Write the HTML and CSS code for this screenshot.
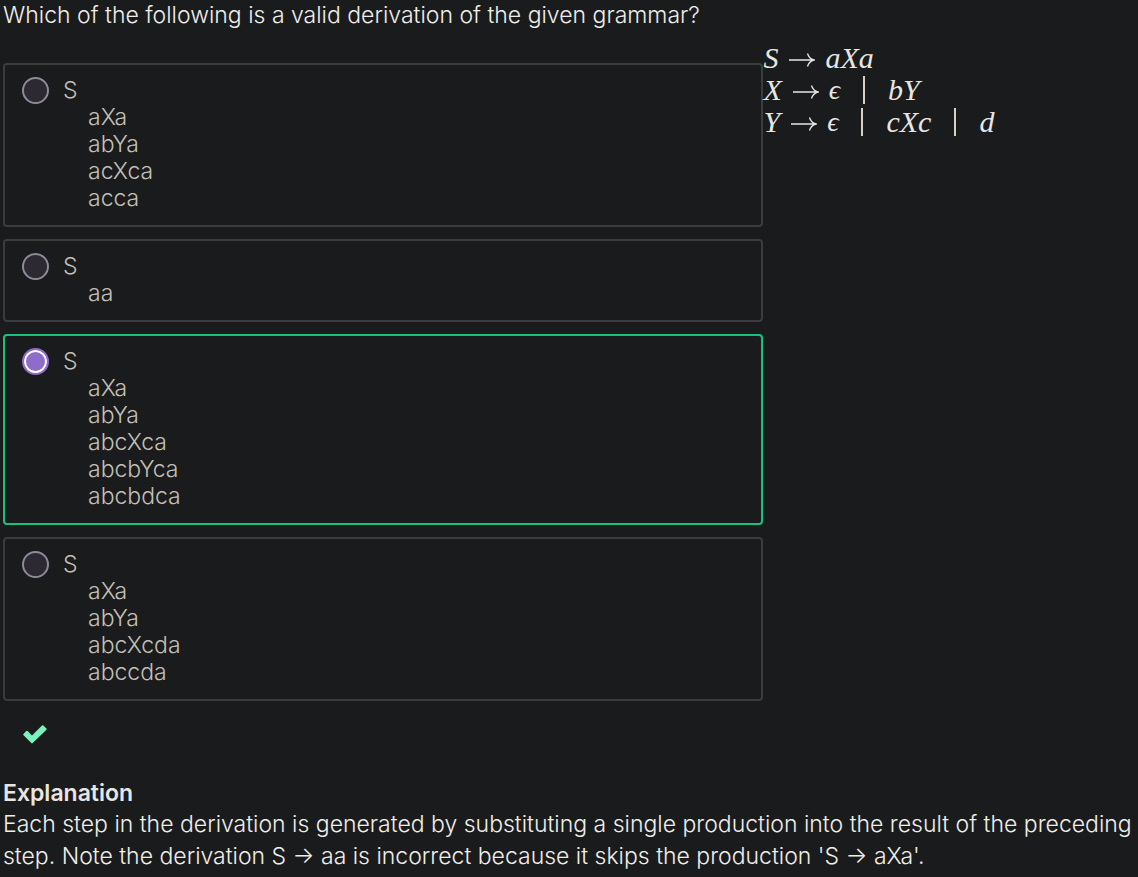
FILE: index.html
```html
<!DOCTYPE html>
<html lang="en">
<head>
<meta charset="utf-8">
<meta name="viewport" content="width=device-width, initial-scale=1">
<title>Grammar derivation</title>
<link rel="stylesheet" href="styles.css">
</head>
<body>
<svg class="defs" aria-hidden="true">
  <symbol id="arrow" viewBox="0 0 26 16"><path d="M0 8H25M18.5 1.5C19.5 5 22 7.200 25 8C22 8.800 19.500 11 18.500 14.500" fill="none" stroke="currentColor" stroke-width="1.300"/></symbol>
</svg>
<main class="page">
  <h1 class="question" id="question">Which of the following is a valid derivation of the given grammar?</h1>
  <div class="columns">
    <div class="options" role="radiogroup" aria-labelledby="question">
      <label class="option">
        <input class="radio" type="radio" name="answer">
        <span class="steps"><span class="start">S</span><span>aXa</span><span>abYa</span><span>acXca</span><span>acca</span></span>
      </label>
      <label class="option">
        <input class="radio" type="radio" name="answer">
        <span class="steps"><span class="start">S</span><span>aa</span></span>
      </label>
      <label class="option correct">
        <input class="radio" type="radio" name="answer" checked>
        <span class="steps"><span class="start">S</span><span>aXa</span><span>abYa</span><span>abcXca</span><span>abcbYca</span><span>abcbdca</span></span>
      </label>
      <label class="option">
        <input class="radio" type="radio" name="answer">
        <span class="steps"><span class="start">S</span><span>aXa</span><span>abYa</span><span>abcXcda</span><span>abccda</span></span>
      </label>
    </div>
    <div class="grammar">
      <div class="rule"><i>S</i><svg class="arrow" role="img" aria-label="produces"><use href="#arrow"/></svg><i>aXa</i></div>
      <div class="rule"><i>X</i><svg class="arrow" role="img" aria-label="produces"><use href="#arrow"/></svg><i class="epsilon">ϵ</i><span class="bar"></span><i>bY</i></div>
      <div class="rule"><i>Y</i><svg class="arrow" role="img" aria-label="produces"><use href="#arrow"/></svg><i class="epsilon">ϵ</i><span class="bar"></span><i>cXc</i><span class="bar"></span><i>d</i></div>
    </div>
  </div>
  <svg class="check" viewBox="0 0 24 19" role="img" aria-label="Correct"><path d="M.5 10.200Q-.1 9.500.5 8.900L3.200 6.100Q3.900 5.500 4.600 6.100L9 10.500L19 .600Q19.700 0 20.400.600L23.400 3.400Q24 4.100 23.400 4.800L9.700 18.100Q9 18.700 8.300 18.100Z" fill="#79f2c0"/></svg>
  <section class="explanation">
    <h2 class="heading">Explanation</h2>
    <p class="text">Each step in the derivation is generated by substituting a single production into the result of the preceding step. Note the derivation S → aa is incorrect because it skips the production 'S → aXa'.</p>
  </section>
</main>
</body>
</html>
```
FILE: styles.css
```css
* { box-sizing: border-box; }
body {
  margin: 0;
  background: #1a1b1c;
  color: #f0eeeb;
  font: 300 23px/32px Inter, sans-serif;
}
.defs { position: absolute; width: 0; height: 0; }
.page { padding-left: 3px; }
.question { margin: 0; font-size: 23px; font-weight: 300; line-height: 30px; }
.columns { display: grid; grid-template-columns: 67fr 33fr; padding-top: 12px; }
.options { display: flex; flex-direction: column; gap: 12px; padding-top: 21px; }
.option {
  display: flex;
  align-items: flex-start;
  gap: 14px;
  padding: 12px 17px 13px;
  border: 2px solid #3a3c3e;
  border-radius: 4px;
  color: #c4bfb6;
  line-height: 27px;
}
.correct { border-color: #17c37b; }
.radio {
  appearance: none;
  flex: none;
  width: 27px;
  height: 27px;
  margin: 0;
  border: 2px solid #8e8b99;
  border-radius: 50%;
  background: #2c2933;
}
.radio:checked {
  border-color: #8e6cc9;
  background: #8e6cc9;
  box-shadow: inset 0 0 0 2px #fff;
}
.steps { display: flex; flex-direction: column; padding-left: 25px; }
.start { margin-left: -25px; }
.grammar { color: #e8e6e3; font: 30px/32px "Liberation Serif", "DejaVu Serif", serif; }
.rule { display: flex; align-items: center; }
.arrow { width: 26px; height: 16px; margin: 3px 10px 0 11px; }
.epsilon { font-size: 28px; }
.bar { width: 2px; height: 28px; margin: 0 23px; background: #d9cfc3; }
.check { display: block; width: 24px; height: 19px; margin: 24px 0 34px 20px; }
.heading { margin: 0; color: #e8e6e3; font-size: 23px; font-weight: 600; line-height: 30px; }
.text { margin: 0; }
```
